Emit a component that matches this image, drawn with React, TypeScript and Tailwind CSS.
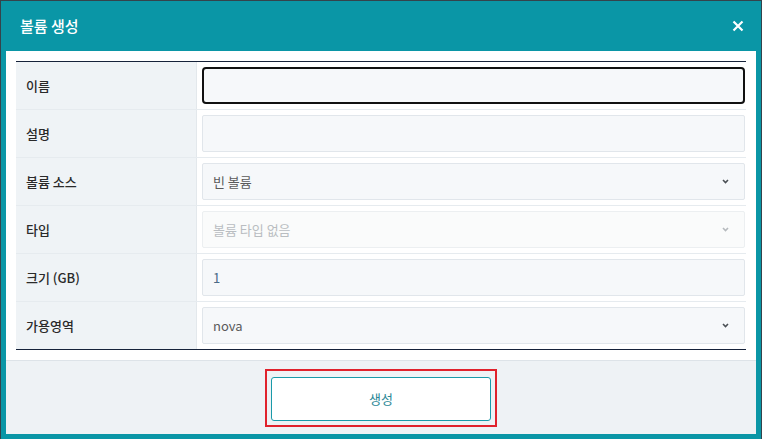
const rows = [
  { label: '이름', kind: 'focus' },
  { label: '설명', kind: 'input' },
  { label: '볼륨 소스', kind: 'select', value: '빈 볼륨' },
  { label: '타입', kind: 'disabled', value: '볼륨 타입 없음' },
  { label: '크기 (GB)', kind: 'number', value: '1' },
  { label: '가용영역', kind: 'select', value: 'nova' },
];

const Chevron = ({ light }: { light?: boolean }) => (
  <svg width="7" height="5" viewBox="0 0 7 5" className="shrink-0">
    <path
      d="M1 1 L3.5 3.5 L6 1"
      fill="none"
      stroke={light ? '#b5b9bd' : '#4a4f54'}
      strokeWidth="1.6"
    />
  </svg>
);

const Field = ({ kind, value }: { kind: string; value?: string }) => {
  if (kind === 'focus') {
    return <div className="h-[37px] w-full rounded-[4px] border-2 border-[#111] bg-[#f6f8fa]" />;
  }
  if (kind === 'input') {
    return <div className="h-[37px] w-full rounded-[2px] border border-[#e1e6eb] bg-[#f6f8fa]" />;
  }
  if (kind === 'number') {
    return (
      <div className="flex h-[37px] w-full items-center rounded-[2px] border border-[#e1e6eb] bg-[#f6f8fa] pl-[10px] text-[13px] text-[#4a6a86]">
        {value}
      </div>
    );
  }
  const disabled = kind === 'disabled';
  return (
    <div
      className={
        disabled
          ? 'flex h-[37px] w-full items-center justify-between rounded-[2px] border border-[#eceff1] bg-[#fafbfb] pl-[10px] pr-[15px] text-[13px] text-[#b9bdc1]'
          : 'flex h-[37px] w-full items-center justify-between rounded-[2px] border border-[#e1e6eb] bg-[#f6f8fa] pl-[10px] pr-[15px] text-[13px] text-[#5a5a5a]'
      }
    >
      <span>{value}</span>
      <Chevron light={disabled} />
    </div>
  );
};

const App = () => {
  return (
    <div className="h-[439px] w-[762px] overflow-hidden bg-[#34434b] px-px pt-px font-['Noto_Sans_CJK_KR','Noto_Sans',sans-serif]">
      <div className="flex h-[438px] flex-col bg-[#0a96a6] px-[5px] pb-[5px]">
        <div className="flex h-[50px] shrink-0 items-center justify-between pl-[14px] pr-[12px] text-white">
          <div className="text-[15px] font-medium">볼륨 생성</div>
          <svg width="12" height="12" viewBox="0 0 12 12">
            <path d="M1.5 1.5 L10.5 10.5 M10.5 1.5 L1.5 10.5" stroke="#fff" strokeWidth="2.2" />
          </svg>
        </div>
        <div className="flex flex-1 flex-col bg-white">
          <div className="border-b border-[#dde3e8] px-[10px] py-[10px]">
            <div className="border-y border-[#16223a]">
              {rows.map((r, i) => (
                <div
                  key={r.label}
                  className={
                    i < rows.length - 1
                      ? 'grid h-[48px] grid-cols-[181px_1fr] border-b border-[#e6ebef]'
                      : 'grid h-[47px] grid-cols-[181px_1fr]'
                  }
                >
                  <div className="flex items-center border-r border-[#e3e8ec] bg-[#eff3f6] pl-[10px] text-[13px] font-medium text-[#2a2a2a]">
                    {r.label}
                  </div>
                  <div className="flex items-center pl-[5px] pr-px">
                    <Field kind={r.kind} value={r.value} />
                  </div>
                </div>
              ))}
            </div>
          </div>
          <div className="flex flex-1 items-center justify-center bg-[#eef2f5]">
            <div className="border-2 border-[#e0222c] px-[4px] pb-[4px] pt-[6px]">
              <button className="flex h-[44px] w-[220px] items-center justify-center rounded-[3px] border border-[#1a9aa9] bg-white text-[13px] text-[#2a8796]">
                생성
              </button>
            </div>
          </div>
        </div>
      </div>
    </div>
  );
};

export default App;
